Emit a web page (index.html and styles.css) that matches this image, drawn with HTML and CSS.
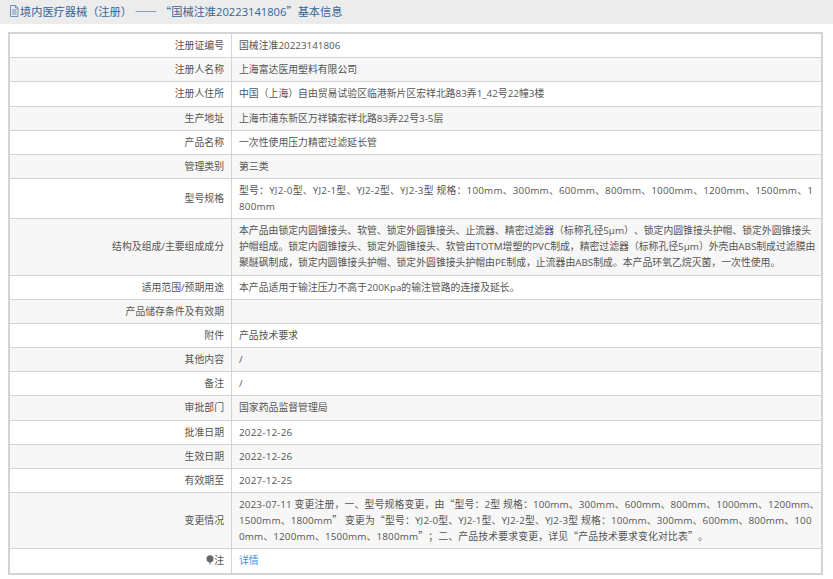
FILE: index.html
```html
<!DOCTYPE html>
<html lang="zh-CN">
  <head>
    <meta charset="UTF-8" />
    <meta name="viewport" content="width=device-width, initial-scale=1.0" />
    <title>基本信息</title>
    <link rel="stylesheet" href="styles.css">
  </head>
  <body>
    <div class="info-title">
      <svg class="doc-icon" viewBox="0 0 10 12" width="10" height="12">
        <path d="M1.500 .5h5l2.500 2.500v8.500h-7.500z M6.500 .5v2.500h2.500 M3 5h4.500 M3 7h4.500 M3 9h4.500" fill="none" stroke="#6f8fc0" stroke-width="1" />
      </svg>
      <span>境内医疗器械（注册） <span class="cjk">——</span> <span class="cjk">“</span>国械注准20223141806<span class="cjk">”</span>基本信息</span>
    </div>
    <table class="info-table">
      <tbody>
        <tr>
          <th>注册证编号</th>
          <td>国械注准20223141806</td>
        </tr>
        <tr>
          <th>注册人名称</th>
          <td>上海富达医用塑料有限公司</td>
        </tr>
        <tr>
          <th>注册人住所</th>
          <td>中国（上海）自由贸易试验区临港新片区宏祥北路83弄1_42号22幢3楼</td>
        </tr>
        <tr>
          <th>生产地址</th>
          <td>上海市浦东新区万祥镇宏祥北路83弄22号3-5层</td>
        </tr>
        <tr>
          <th>产品名称</th>
          <td>一次性使用压力精密过滤延长管</td>
        </tr>
        <tr>
          <th>管理类别</th>
          <td>第三类</td>
        </tr>
        <tr>
          <th>型号规格</th>
          <td class="latin-heavy">型号：YJ2-0型、YJ2-1型、YJ2-2型、YJ2-3型 规格：100mm、300mm、600mm、800mm、1000mm、1200mm、1500mm、1800mm</td>
        </tr>
        <tr>
          <th>结构及组成/主要组成成分</th>
          <td class="long-text">本产品由锁定内圆锥接头、软管、锁定外圆锥接头、止流器、精密过滤器（标称孔径5μm）、锁定内圆锥接头护帽、锁定外圆锥接头护帽组成。锁定内圆锥接头、锁定外圆锥接头、软管由TOTM增塑的PVC制成，精密过滤器（标称孔径5μm）外壳由ABS制成过滤膜由聚醚砜制成，锁定内圆锥接头护帽、锁定外圆锥接头护帽由PE制成，止流器由ABS制成。本产品环氧乙烷灭菌，一次性使用。</td>
        </tr>
        <tr>
          <th>适用范围/预期用途</th>
          <td>本产品适用于输注压力不高于200Kpa的输注管路的连接及延长。</td>
        </tr>
        <tr>
          <th>产品储存条件及有效期</th>
          <td></td>
        </tr>
        <tr>
          <th>附件</th>
          <td>产品技术要求</td>
        </tr>
        <tr>
          <th>其他内容</th>
          <td>/</td>
        </tr>
        <tr>
          <th>备注</th>
          <td>/</td>
        </tr>
        <tr>
          <th>审批部门</th>
          <td>国家药品监督管理局</td>
        </tr>
        <tr>
          <th>批准日期</th>
          <td class="latin-heavy">2022-12-26</td>
        </tr>
        <tr>
          <th>生效日期</th>
          <td class="latin-heavy">2022-12-26</td>
        </tr>
        <tr>
          <th>有效期至</th>
          <td class="latin-heavy">2027-12-25</td>
        </tr>
        <tr>
          <th>变更情况</th>
          <td class="change-log">2023-07-11 变更注册，一、型号规格变更，由<span class="cjk">“</span>型号：2型 规格：100mm、300mm、600mm、800mm、1000mm、1200mm、<br />1500mm、1800mm<span class="cjk">”</span> 变更为<span class="cjk">“</span>型号：YJ2-0型、YJ2-1型、YJ2-2型、YJ2-3型 规格：100mm、300mm、600mm、800mm、100<br />0mm、1200mm、1500mm、1800mm<span class="cjk">”</span>；二、产品技术要求变更，详见<span class="cjk">“</span>产品技术要求变化对比表<span class="cjk">”</span>。</td>
        </tr>
        <tr>
          <th>
            <svg class="bulb-icon" viewBox="0 0 8 10" width="8" height="10">
              <circle cx="4" cy="3.800" r="3.500" fill="#666" />
              <path d="M2.800 7h2.400l-1.200 3z" fill="#888" />
            </svg>注
          </th>
          <td><a class="detail-link" href="#">详情</a></td>
        </tr>
      </tbody>
    </table>
  </body>
</html>
```

FILE: styles.css
```css
body {
  margin: 0;
  font-family: "Open Sans", "Noto Sans CJK SC", sans-serif;
  font-size: 9.85px;
  line-height: 16px;
  color: #555;
  background-color: #fff;
  text-spacing-trim: space-all;
}

/* 引号和破折号要全角宽度 */
.cjk {
  font-family: "Noto Sans CJK SC", sans-serif;
}

.info-title {
  display: flex;
  align-items: center;
  gap: 1px;
  height: 24px;
  padding: 0 0 2px 9px;
  box-sizing: border-box;
  font-size: 11.2px;
  color: #336699;
  background-color: #ececec;
}
.doc-icon {
  flex: none;
}

.info-table {
  width: 815px;
  margin: 8px 0 0 8px;
  border: 2px solid #d4d4d4;
  border-collapse: collapse;
  table-layout: fixed;
}
.info-table tr {
  border-bottom: 1px solid #d4d4d4;
}
.info-table tr:nth-child(even) {
  background-color: #f7f7f7;
}
.info-table th,
.info-table td {
  padding: 3px 6px 4.2px 7px;
  vertical-align: middle;
  word-break: break-all;
}
.info-table th {
  width: 207px;
  padding-right: 7px;
  border-right: 1px solid #d4d4d4;
  font-weight: normal;
  text-align: right;
}
.info-table .latin-heavy {
  letter-spacing: 0.2px;
}
.info-table .long-text {
  padding-right: 3px;
}
.info-table .change-log {
  padding-right: 0;
  letter-spacing: 0.15px;
}

.bulb-icon {
  vertical-align: -1px;
}
.detail-link {
  color: #3e8ee8;
  text-decoration: none;
}
```
